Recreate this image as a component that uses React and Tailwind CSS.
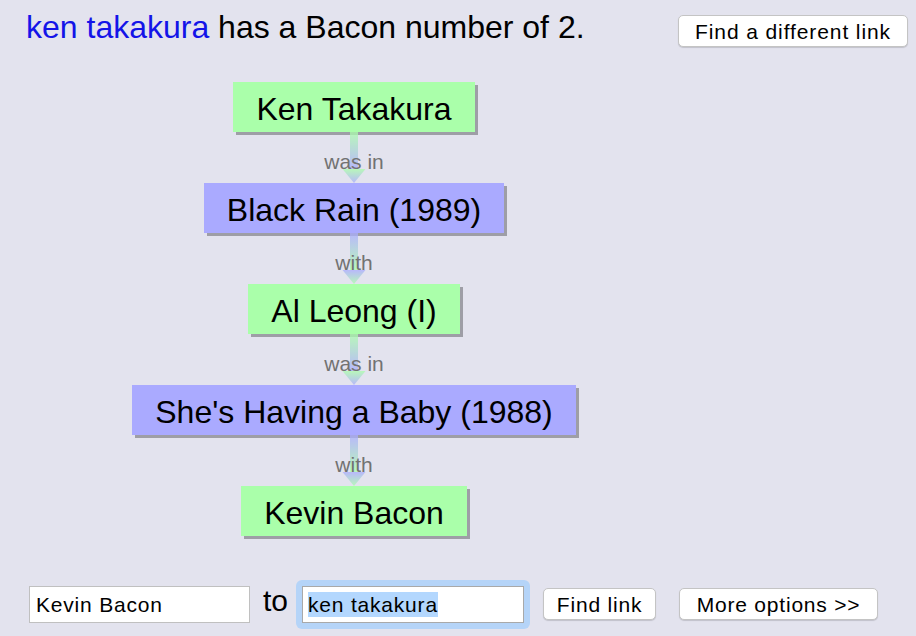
import React from 'react';

const GREEN = '#aaffaa';
const BLUE = '#aaaaff';

const path = [
  { name: 'Ken Takakura', kind: 'person' },
  { label: 'was in' },
  { name: 'Black Rain (1989)', kind: 'movie' },
  { label: 'with' },
  { name: 'Al Leong (I)', kind: 'person' },
  { label: 'was in' },
  { name: "She's Having a Baby (1988)", kind: 'movie' },
  { label: 'with' },
  { name: 'Kevin Bacon', kind: 'person' },
];

function Node({ name, kind }) {
  return (
    <div
      className={`h-[50px] px-[23px] pt-[9px] text-[32px] leading-[36px] text-black shadow-[3px_3px_0_rgba(0,0,0,0.3)] ${
        kind === 'movie' ? 'bg-[#aaaaff]' : 'bg-[#aaffaa]'
      }`}
    >
      {name}
    </div>
  );
}

function Connector({ label, from, to, id }) {
  return (
    <div className="relative h-[51px] w-full flex justify-center pt-[18px]">
      {/* arrow drawing sits behind the label */}
      <svg className="absolute left-1/2 top-0 -translate-x-1/2" width="26" height="51" viewBox="0 0 26 51">
        <defs>
          <linearGradient id={id} x1="0" y1="0" x2="0" y2="1">
            <stop offset="0" stopColor={from} />
            <stop offset="1" stopColor={to} />
          </linearGradient>
        </defs>
        <g fill={`url(#${id})`} opacity="0.75">
          <rect x="9" y="0" width="8" height="37" />
          <polygon points="1.5,37 24.5,37 13,51" />
        </g>
      </svg>
      <span className="relative text-[21px] leading-[24px] text-[#727272]">{label}</span>
    </div>
  );
}

export default function App() {
  return (
    <div className="w-[916px] h-[636px] bg-[#e3e3ee] overflow-hidden font-['Liberation_Sans',Arial,sans-serif]">
      <div className="flex items-start justify-between pl-[26px] pr-[8px] pt-[9px]">
        <div className="text-[32px] leading-[37px] text-black">
          <span className="text-[#1414e8]">ken takakura</span> has a Bacon number of 2.
        </div>
        <button className="mt-[6px] h-[32px] w-[230px] rounded-[5px] border border-[#c4c4c4] bg-white text-[21px] tracking-[0.9px] text-black shadow-[0_1px_1px_rgba(0,0,0,0.15)]">
          Find a different link
        </button>
      </div>

      <div className="mt-[35px] w-[708px] flex flex-col items-center">
        {path.map((step, i) =>
          step.label ? (
            <Connector
              key={i}
              id={`arr${i}`}
              label={step.label}
              from={path[i - 1].kind === 'movie' ? BLUE : GREEN}
              to={path[i + 1].kind === 'movie' ? BLUE : GREEN}
            />
          ) : (
            <Node key={i} name={step.name} kind={step.kind} />
          )
        )}
      </div>

      <div className="mt-[46px] h-[44px] flex items-center pl-[29px]">
        <div className="w-[221px] h-[37px] border border-[#c0c0c0] bg-white px-[6px] text-[21px] leading-[35px] tracking-[0.8px] text-black">
          Kevin Bacon
        </div>
        <span className="ml-[13px] text-[30px] leading-[36px] text-black -mt-[6px]">to</span>
        <div className="ml-[8px] rounded-[6px] bg-[#b5d4f8] p-[6px] -my-[6px]">
          <div className="w-[222px] h-[37px] border border-[#a9a9a9] bg-white pl-[5px] pt-[5px]">
            <span className="inline-block bg-[#b3d7fe] text-[21px] leading-[25px] tracking-[0.8px] text-black">
              ken takakura
            </span>
          </div>
        </div>
        <button className="ml-[13px] h-[32px] w-[113px] rounded-[5px] border border-[#c4c4c4] bg-white text-[21px] tracking-[0.8px] text-black shadow-[0_1px_1px_rgba(0,0,0,0.15)]">
          Find link
        </button>
        <button className="ml-[23px] h-[32px] w-[199px] rounded-[5px] border border-[#c4c4c4] bg-white text-[21px] tracking-[0.8px] text-black shadow-[0_1px_1px_rgba(0,0,0,0.15)]">
          More options &gt;&gt;
        </button>
      </div>
    </div>
  );
}
